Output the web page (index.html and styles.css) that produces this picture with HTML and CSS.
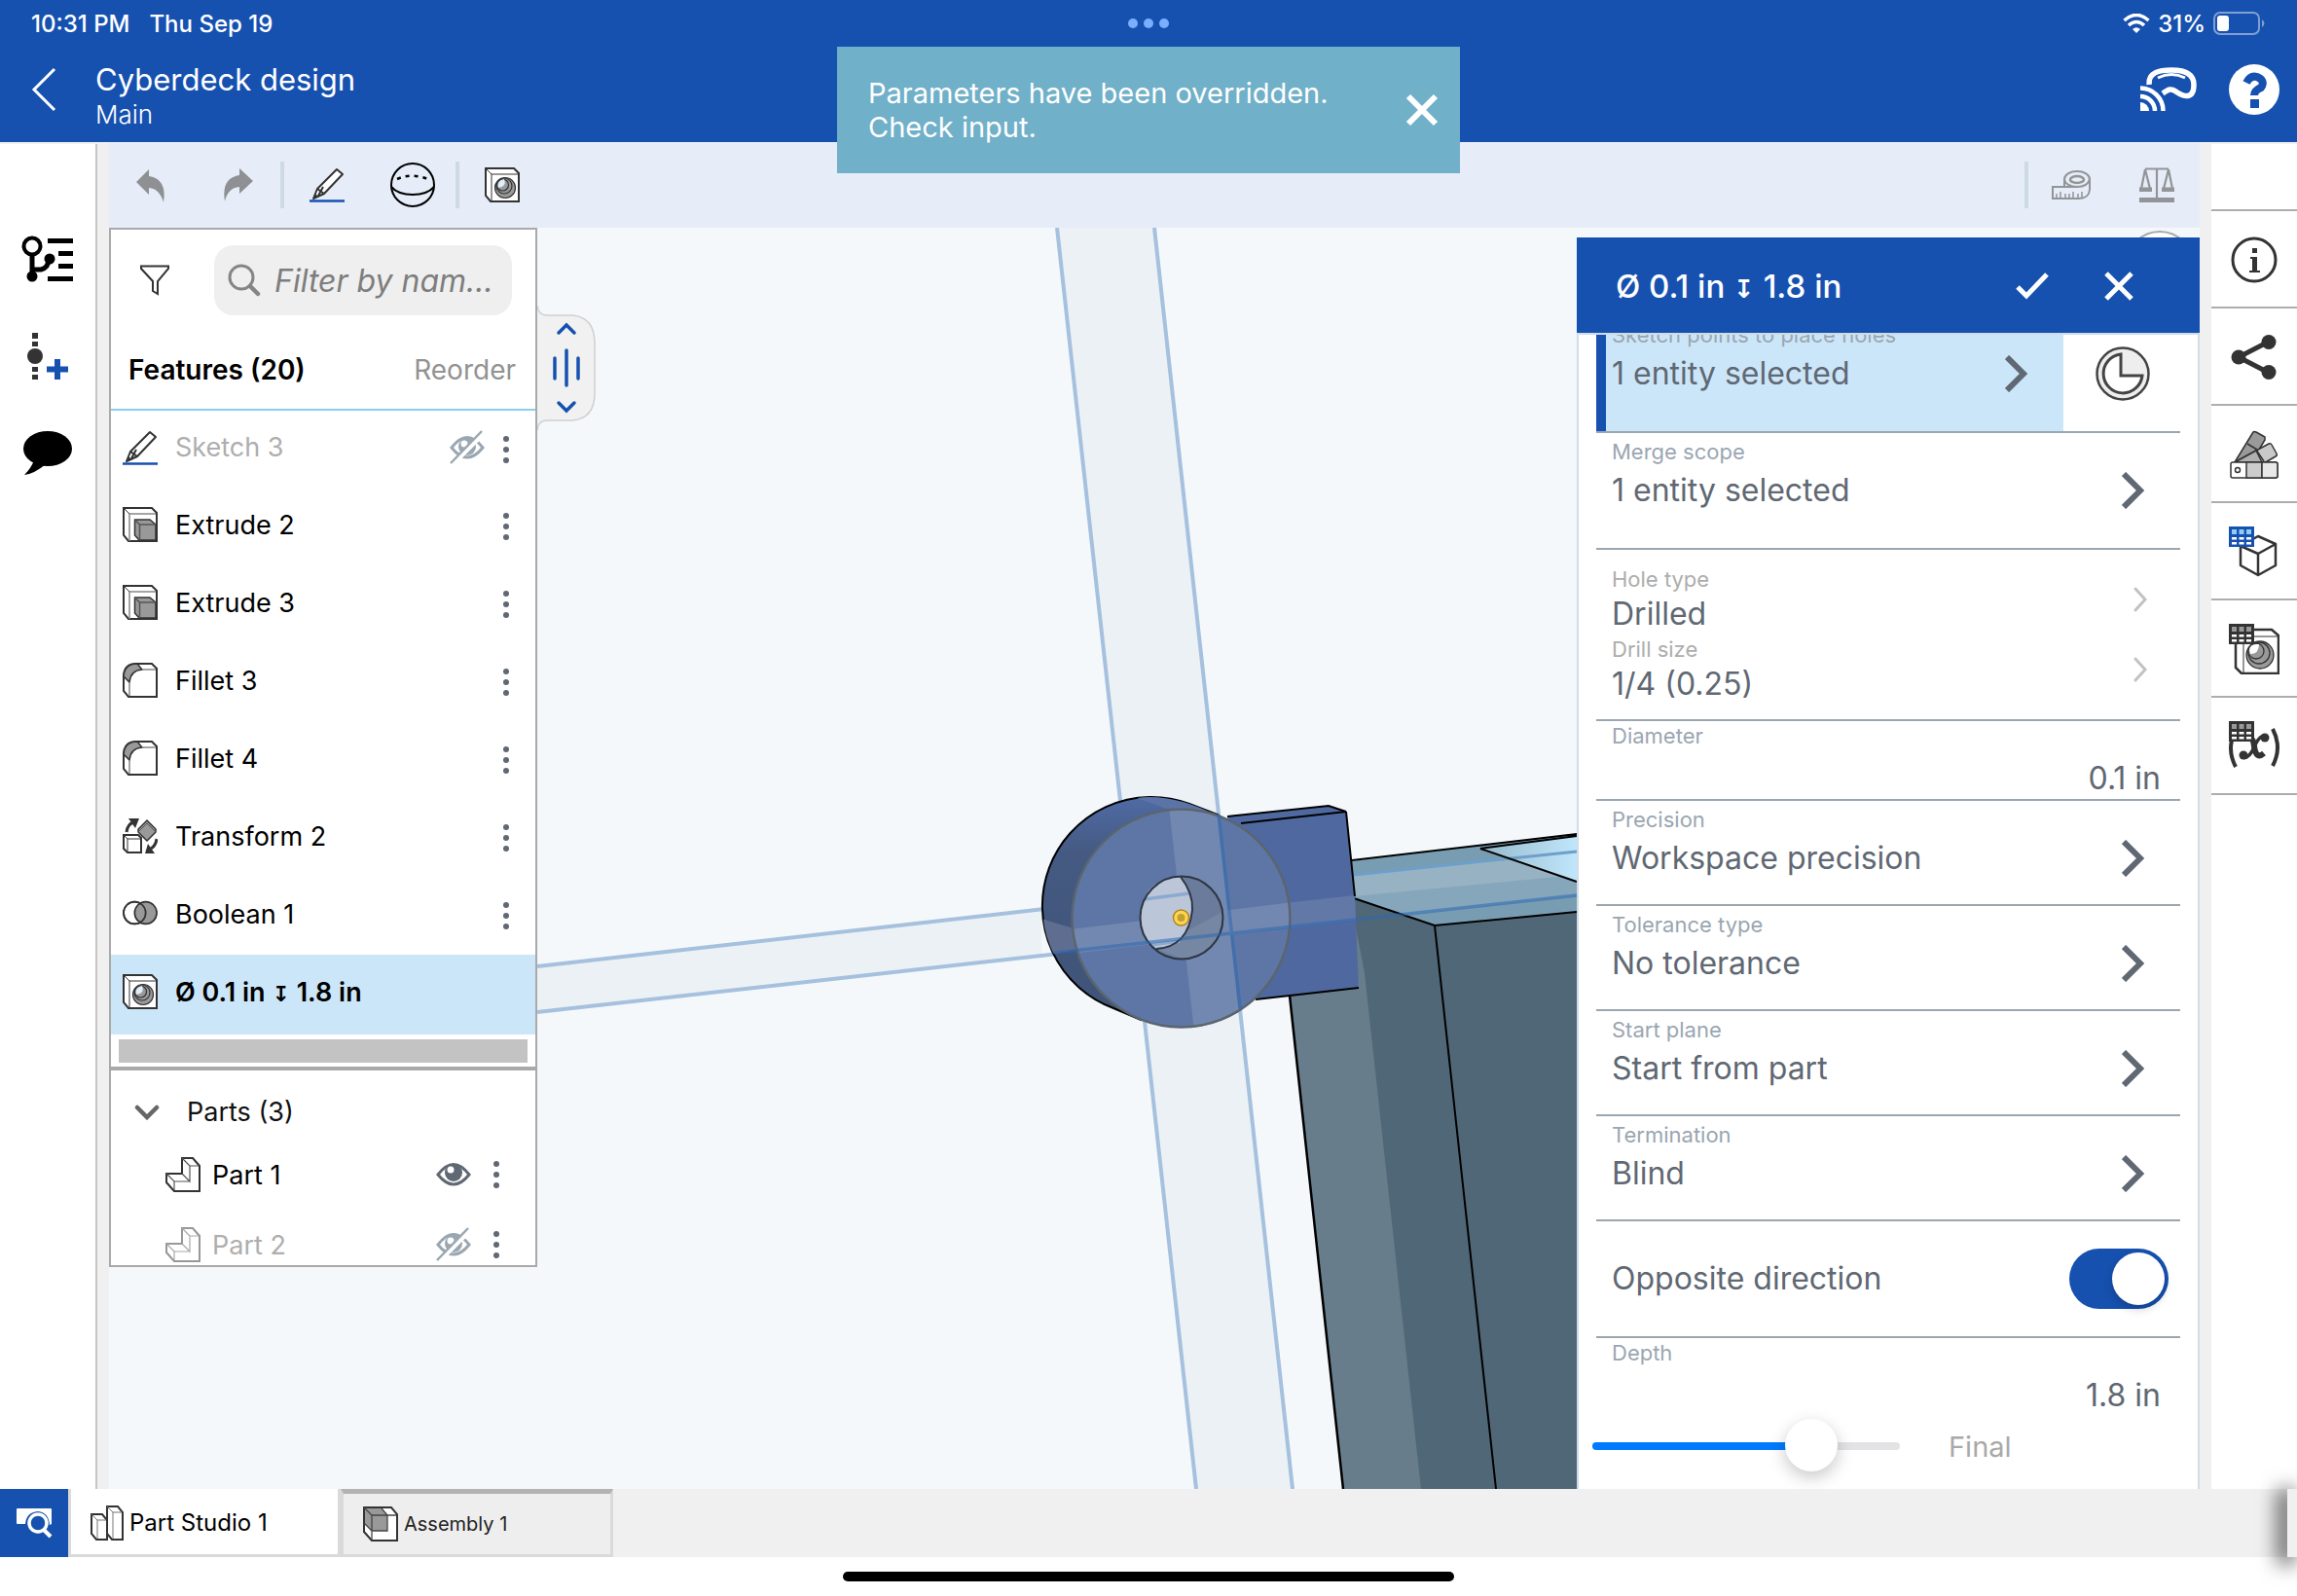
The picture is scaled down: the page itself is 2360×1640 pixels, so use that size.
FILE: index.html
```html
<!DOCTYPE html>
<html lang="en">
<head>
<meta charset="utf-8">
<title>Cyberdeck design</title>
<meta name="viewport" content="width=device-width, initial-scale=1">
<link rel="stylesheet" href="styles.css">
</head>
<body>
<svg class="defs" aria-hidden="true">
  <symbol id="i-dots" viewBox="0 0 8 36"><g fill="#5f6873"><circle cx="4" cy="7" r="3"/><circle cx="4" cy="18" r="3"/><circle cx="4" cy="29" r="3"/></g></symbol>
  <symbol id="i-chev" viewBox="0 0 24 38"><path d="M2 2 19 19 2 36" fill="none" stroke="#5f6873" stroke-width="6"/></symbol>
  <symbol id="i-chev-s" viewBox="0 0 14 26"><path d="M2 2 12 13 2 24" fill="none" stroke="#c2c2c2" stroke-width="3" stroke-linecap="round"/></symbol>
  <symbol id="i-pencil" viewBox="0 0 36 36"><path d="M4 32 8 22 28 2 34 7 15 27ZM8 22l7 5M9 29l5-9" fill="#fff" stroke="#333" stroke-width="2" stroke-linejoin="round"/><path d="M4 32l2-5 3 3z" fill="#333"/><path d="M0 34.500H36" stroke="#1651b0" stroke-width="2.500"/></symbol>
  <symbol id="i-extrude" viewBox="0 0 36 36"><path d="M1 1H30L35 6V35H6L1 29Z" fill="#fff" stroke="#333" stroke-width="2"/><path d="M7 35V7H34" fill="none" stroke="#888" stroke-width="1.500"/><path d="M1 1 7 7" stroke="#333"/><path d="M12.500 13H28L34 18V34H17L12.500 29Z" fill="#999" stroke="#333" stroke-width="1.500"/><path d="M12.500 13 17.500 18H34M17.500 18V34" fill="none" stroke="#555" stroke-width="1.500"/></symbol>
  <symbol id="i-fillet" viewBox="0 0 36 36"><path d="M1 29V13Q2 1 14 1H30L35 6V35H6Z" fill="#fff" stroke="#333" stroke-width="2"/><path d="M1 14Q2 1 15 1L20 7Q8 8 7 20Z" fill="#999" stroke="#333" stroke-width="1.500"/><path d="M7 20V34M20 7H34" stroke="#888" stroke-width="1.500"/></symbol>
  <symbol id="i-transform" viewBox="0 0 36 36"><path d="M1 17H16L19 20V35H5L1 31Z" fill="#fff" stroke="#333" stroke-width="2"/><path d="M1 17 5 21V34M5 21H18" fill="none" stroke="#333"/><path d="M25 2 34 11V14L25 23 16 14V11Z" fill="#999" stroke="#333" stroke-width="1.500"/><path d="M16 14 25 5 34 14" fill="none" stroke="#555"/><path d="M4 14Q5 6 11 4" fill="none" stroke="#333" stroke-width="3"/><path d="M6 0H17L13 10Z" fill="#333"/><path d="M35 21Q34 28 29 31" fill="none" stroke="#333" stroke-width="3"/><path d="M23 36H33L26 26Z" fill="#333"/></symbol>
  <symbol id="i-boolean" viewBox="0 0 38 36"><g stroke="#333" stroke-width="1.800"><circle cx="13" cy="17" r="12" fill="#fff"/><circle cx="25" cy="17" r="12" fill="#999"/><circle cx="13" cy="17" r="12" fill="none"/></g></symbol>
  <symbol id="i-hole" viewBox="0 0 36 36"><path d="M1 1H30L35 6V35H6L1 29Z" fill="#fff" stroke="#333" stroke-width="2"/><path d="M1 1 7 7V34M7 7H34" fill="none" stroke="#333" stroke-width="1"/><g stroke="#333" stroke-width="1.200"><circle cx="21" cy="21" r="10.500" fill="#999"/><circle cx="20" cy="19" r="8" fill="#999"/><circle cx="18.500" cy="18" r="6" fill="#999"/></g><path d="M20 12Q23 20 14 21 12 14 20 12Z" fill="#dfeefa"/></symbol>
  <symbol id="i-part" viewBox="0 0 36 36"><path d="M17 1H28L35 9V35H9L1 26V17H17Z" fill="#fff" stroke="#333" stroke-width="2"/><path d="M17 1 25 9V25L17 17M1 17 9 25H25M9 25V34M25 9H34" fill="none" stroke="#555" stroke-width="1.200"/></symbol>
  <symbol id="i-eye" viewBox="0 0 36 36"><path d="M2 18Q18-3 34 18 18 38 2 18Z" fill="#fff" stroke="#5f6873" stroke-width="3"/><circle cx="18" cy="16" r="9" fill="#5f6873"/><circle cx="15" cy="13" r="3.500" fill="#fff"/></symbol>
  <symbol id="i-eye-off" viewBox="0 0 36 36"><path d="M2 18Q18-3 34 18 18 38 2 18Z" fill="#fff" stroke="#9aa7b2" stroke-width="3"/><circle cx="18" cy="17" r="9" fill="#9aa7b2"/><circle cx="15" cy="14" r="3.500" fill="#fff"/><path d="M1 37 35 3" stroke="#fff" stroke-width="5"/><path d="M1 34 33 1" stroke="#9aa7b2" stroke-width="2.500"/></symbol>
  <symbol id="i-grid" viewBox="0 0 26 21"><path d="M0 0H26V21H0Z"/><path d="M3 3h5v5H3zM10.500 3h5v5h-5zM18 3h5v5h-5z" fill="var(--cell)"/><path d="M3 11h5v2.500H3zM10.500 11h5v2.500h-5zM18 11h5v2.500h-5zM3 16h5v2.500H3zM10.500 16h5v2.500h-5zM18 16h5v2.500h-5z" fill="#fff"/></symbol>
</svg>

<header class="header">
  <div class="status">
    <div class="status-left"><span>10:31 PM</span><span>Thu Sep 19</span></div>
    <svg class="multitask" width="42" height="10" viewBox="0 0 42 10" fill="#7aaeff"><circle cx="5" cy="5" r="5"/><circle cx="21" cy="5" r="5"/><circle cx="37" cy="5" r="5"/></svg>
    <div class="status-right">
      <svg width="28" height="20" viewBox="0 0 28 20"><g fill="none" stroke="#fff" stroke-width="3.600"><path d="M1.500 7Q14-4 26.500 7"/><path d="M6 12Q14 5 22 12"/></g><path d="M10 16Q14 12.500 18 16L14 20Z" fill="#fff"/></svg>
      <span>31%</span>
      <svg width="54" height="24" viewBox="0 0 54 24"><rect x="1" y="1" width="46" height="22" rx="6" fill="none" stroke="#809fd4" stroke-width="2"/><rect x="4" y="4" width="12" height="16" rx="3" fill="#fff"/><path d="M50 8Q55 12 50 16Z" fill="#809fd4"/></svg>
    </div>
  </div>
  <div class="nav">
    <button class="plain back" aria-label="Back"><svg width="26" height="46" viewBox="0 0 26 46"><path d="M24 2 3 23 24 44" fill="none" stroke="#fff" stroke-width="3"/></svg></button>
    <div class="doc"><h1>Cyberdeck design</h1><p>Main</p></div>
    <div class="nav-actions">
      <button class="plain" aria-label="Cast"><svg width="58" height="46" viewBox="0 0 58 46" fill="none" stroke="#fff"><path d="M9 18C8 5 20 3 32 3 46 3 55 7 55 18 55 34 44 30 38 26 31 21 29 23 23 27" stroke-width="5.500"/><path d="M18 11Q32 4 46 11" stroke-width="3"/><path d="M0 21.500A23.500 23.500 0 0 1 23.500 45M0 30A15 15 0 0 1 15 45" stroke-width="4.500"/><path d="M0 36A9 9 0 0 1 9 45H0Z" fill="#fff" stroke="none"/></svg></button>
      <button class="plain" aria-label="Help"><svg width="52" height="52" viewBox="0 0 52 52"><circle cx="26" cy="26" r="26" fill="#fff"/><path d="M18 19Q22 11 29 13 38 17 33 24 26 27 26 32" fill="none" stroke="#1651b0" stroke-width="8"/><path d="M22 36h9v9h-9z" fill="#1651b0"/></svg></button>
    </div>
  </div>
  <div class="toast" role="alert">
    <p>Parameters have been overridden.<br>Check input.</p>
    <button class="plain" aria-label="Dismiss"><svg width="34" height="34" viewBox="0 0 34 34"><path d="M3 3 31 31M31 3 3 31" stroke="#fff" stroke-width="6"/></svg></button>
  </div>
</header>

<main class="main">
  <nav class="rail-left">
    <button class="plain" aria-label="Versions"><svg width="54" height="50" viewBox="0 0 54 50"><circle cx="11" cy="12" r="8.500" fill="none" stroke="#000" stroke-width="4"/><path d="M11 20V42M11 36H20Q28 34 28 25" fill="none" stroke="#000" stroke-width="5"/><circle cx="11" cy="43" r="5.500"/><circle cx="29" cy="25" r="5.500"/><path d="M27 4H53V9H27ZM38 17H53V22H38ZM38 30H53V35H38ZM27 43H53V48H27Z"/></svg></button>
    <button class="plain" aria-label="Insert"><svg width="44" height="50" viewBox="0 0 44 50"><g fill="#333"><path d="M6 1h6v6H6zM6 10h6v5H6zM6 36h6v5H6zM6 44h6v5H6z"/><circle cx="9" cy="25" r="8"/></g><path d="M32 28V49M21 38.500H43" stroke="#1651b0" stroke-width="6"/></svg></button>
    <button class="plain" aria-label="Comments"><svg width="52" height="46" viewBox="0 0 52 46"><ellipse cx="26" cy="18" rx="25" ry="18"/><path d="M12 30Q9 38 2 45 12 44 24 34Z"/></svg></button>
  </nav>

  <section class="studio">
    <div class="toolbar">
      <div class="tools">
        <button class="plain" aria-label="Undo"><svg width="36" height="36" viewBox="0 0 36 36"><path d="M2 15 15 2V9Q34 12 30 36 26 22 15 21V28Z" fill="#8e9093"/></svg></button>
        <button class="plain" aria-label="Redo"><svg width="36" height="36" viewBox="0 0 36 36"><path d="M34 14 20 1V8Q1 11 5 35 8 21 20 20V27Z" fill="#8e9093"/></svg></button>
        <span class="sep"></span>
        <button class="plain" aria-label="Sketch"><svg width="36" height="36"><use href="#i-pencil"/></svg></button>
        <button class="plain" aria-label="Solid"><svg width="46" height="46" viewBox="0 0 46 46" fill="none" stroke="#000" stroke-width="2"><circle cx="23" cy="23" r="22"/><path d="M1 25Q8 33 23 33T45 25"/><path d="M7 17Q23 10 41 18" stroke-dasharray="4 5" stroke-width="2.500"/></svg></button>
        <span class="sep"></span>
        <button class="plain" aria-label="Hole"><svg width="36" height="36"><use href="#i-hole"/></svg></button>
      </div>
      <div class="tools">
        <span class="sep"></span>
        <button class="plain" aria-label="Measure"><svg width="40" height="30" viewBox="0 0 40 30" fill="none" stroke="#929497" stroke-width="2"><path d="M13 17V9A13 8 0 0 1 39 9V20Q38 29 28 29H1V17H26Q37 17 39 9M13 9A13 8 0 0 0 26 17"/><ellipse cx="26" cy="9.500" rx="7" ry="3.500" stroke-width="2.500"/><path d="M5 28V24M9 28V22M14 28V24M18 28V24M22 28V22M27 28V24M31 28V22" stroke-width="1.500"/></svg></button>
        <button class="plain" aria-label="Mass properties"><svg width="36" height="36" viewBox="0 0 36 36"><path d="M6 1.500H30M18 1V32M6 2 2 22M6 2 11 22M30 2 25 22M30 2 34 22" fill="none" stroke="#929497" stroke-width="2.200"/><path d="M0 20.500H13V25H0ZM23 20.500H36V25H23ZM0 31H36V36H0Z" fill="#929497"/></svg></button>
      </div>
    </div>

    <div class="canvas">
      <svg class="scene" viewBox="112 234 2148 1296" preserveAspectRatio="xMinYMin slice" aria-label="3D model view">
        <defs>
          <linearGradient id="side" x1="0" y1="0" x2="0" y2="1"><stop offset="0" stop-color="#4f6ba5"/><stop offset=".25" stop-color="#455a82"/><stop offset="1" stop-color="#3f5377"/></linearGradient>
          <linearGradient id="sky" x1="0" y1="0" x2="1" y2="0"><stop offset="0" stop-color="#96b9cc"/><stop offset="1" stop-color="#c0e6fb"/></linearGradient>
          <clipPath id="face"><circle cx="1213.500" cy="943.500" r="113"/></clipPath>
          <clipPath id="back"><circle cx="1183" cy="931" r="112"/></clipPath>
        </defs>
        <circle cx="2219" cy="272" r="34" fill="#fff" stroke="#a8a8a8" stroke-width="2"/>
        <path d="M1086 234H1186L1328 1530H1229Z" fill="#ecf1f5"/>
        <path d="M552 993 1070 935V981L552 1040Z" fill="#ecf1f5"/>
        <g stroke="#a5c1de" stroke-width="4"><path d="M1086 234 1229 1530M1186 234 1328 1530M552 993 1240 915M552 1040 1240 963"/></g>
        <path d="M1387 885 1620 857V940L1474 951 1385 921Z" fill="#789db2"/>
        <path d="M1390 899 1620 875V920L1410 944 1385 921Z" fill="#86a6bb"/>
        <path d="M1390 899 1620 875V899L1391 921Z" fill="#97b3c3"/>
        <path d="M1521 872 1620 859V906Z" fill="url(#sky)"/>
        <path d="M1385 921 1474 951 1620 937V1530H1380L1325 1023 1396 1015Z" fill="#506777"/>
        <path d="M1387 922 1402 1000 1460 1530H1380L1325 1023 1396 1015Z" fill="#687d8b"/>
        <path d="M1391 899 1620 875" stroke="#6e9fca" stroke-width="3"/>
        <g fill="none" stroke="#000" stroke-width="2"><path d="M1389 884 1620 857M1620 906 1521 872 1620 859M1385 921 1474 951 1620 937M1474 951 1537 1530"/><path d="M1325 1023 1380 1530" stroke-width="2.500"/></g>
        <path d="M1261 839 1365 828 1383 834 1392 921 1396 1015 1290 1027Z" fill="#4f69a0"/>
        <path d="M1320 928 1392 920 1393 946 1326 954Z" fill="#6278a7"/>
        <path d="M1261 839 1365 828 1383 834 1275 846M1383 834 1392 921M1290 1027 1396 1015" fill="none" stroke="#000" stroke-width="2"/>
        <path d="M1144 1036A112 112 0 1 1 1222 826L1251 837 1172 1048Z" fill="url(#side)" stroke="#000" stroke-width="2"/>
        <path d="M1168 820Q1205 815 1250 838L1201 832Z" fill="#5b73a6"/>
        <path clip-path="url(#back)" d="M1070 944 1106 955V976L1070 982Z" fill="#5f6e90"/>
        <circle cx="1213.500" cy="943.500" r="112" fill="#5d76a5"/>
        <g clip-path="url(#face)"><path d="M1201 828 1250 828 1275 1060H1227Z" fill="#7288b0"/><path d="M1100 955 1330 927V953L1100 980Z" fill="#7288b0"/></g>
        <circle cx="1213.500" cy="943.500" r="112" fill="none" stroke="#5b656f" stroke-width="2.500"/>
        <circle cx="1214" cy="943" r="42.500" fill="#6b7b9b"/>
        <path d="M1217 958 1256 937Q1258 985 1214 985L1190 976Z" fill="#7587a2"/>
        <path d="M1213 901Q1226 918 1225 935 1221 973 1188 975 1168 958 1172 935 1178 902 1213 901Z" fill="#bbc7d8"/>
        <path d="M1176 924 1222 918M1182 971 1212 967" stroke="#8ea9cf" stroke-width="3.500"/>
        <path d="M1213 901Q1226 918 1225 935 1221 973 1188 975" fill="none" stroke="#2c3544" stroke-width="2"/>
        <circle cx="1214" cy="943" r="42.500" fill="none" stroke="#2c3544" stroke-width="2"/>
        <path d="M1083 979 1620 920M1252 837 1274 1036" stroke="#2c67b0" stroke-opacity=".55" stroke-width="3.500"/>
        <circle cx="1213.500" cy="943" r="8" fill="#ffd453" stroke="#b1861a" stroke-width="1.500"/><circle cx="1213.500" cy="943" r="4" fill="#c0a032"/>
      </svg>

      <aside class="features">
        <div class="filter">
          <button class="plain" aria-label="Filter"><svg width="30" height="32" viewBox="0 0 30 32"><path d="M1 1.500H29V4L18 17V30L13 27V17L1 4Z" fill="#fff" stroke="#333" stroke-width="2"/></svg></button>
          <label class="search">
            <svg width="34" height="34" viewBox="0 0 34 34"><circle cx="14" cy="14" r="12" fill="none" stroke="#858585" stroke-width="3"/><path d="M23 23 31 31" stroke="#858585" stroke-width="4.500" stroke-linecap="round"/></svg>
            <input type="text" placeholder="Filter by nam..." aria-label="Filter by name">
          </label>
        </div>
        <div class="features-head"><h2>Features (20)</h2><button class="plain reorder">Reorder</button></div>
        <ul class="list">
          <li class="muted"><svg width="36" height="36"><use href="#i-pencil"/></svg><span>Sketch 3</span><svg width="36" height="40"><use href="#i-eye-off"/></svg><svg class="more" width="8" height="36"><use href="#i-dots"/></svg></li>
          <li><svg width="36" height="36"><use href="#i-extrude"/></svg><span>Extrude 2</span><svg class="more" width="8" height="36"><use href="#i-dots"/></svg></li>
          <li><svg width="36" height="36"><use href="#i-extrude"/></svg><span>Extrude 3</span><svg class="more" width="8" height="36"><use href="#i-dots"/></svg></li>
          <li><svg width="36" height="36"><use href="#i-fillet"/></svg><span>Fillet 3</span><svg class="more" width="8" height="36"><use href="#i-dots"/></svg></li>
          <li><svg width="36" height="36"><use href="#i-fillet"/></svg><span>Fillet 4</span><svg class="more" width="8" height="36"><use href="#i-dots"/></svg></li>
          <li><svg width="36" height="36"><use href="#i-transform"/></svg><span>Transform 2</span><svg class="more" width="8" height="36"><use href="#i-dots"/></svg></li>
          <li><svg width="36" height="36"><use href="#i-boolean"/></svg><span>Boolean 1</span><svg class="more" width="8" height="36"><use href="#i-dots"/></svg></li>
          <li class="selected"><svg width="36" height="36"><use href="#i-hole"/></svg><span>Ø 0.1 in <b class="depth">↧</b> 1.8 in</span></li>
        </ul>
        <div class="rollback"></div>
        <div class="parts">
          <button class="plain parts-head"><svg width="26" height="16" viewBox="0 0 26 16"><path d="M3 3 13 13 23 3" fill="none" stroke="#666" stroke-width="4.500" stroke-linecap="round"/></svg>Parts (3)</button>
          <ul>
            <li><svg width="36" height="36"><use href="#i-part"/></svg><span>Part 1</span><svg width="36" height="36"><use href="#i-eye"/></svg><svg class="more" width="8" height="36"><use href="#i-dots"/></svg></li>
            <li class="muted"><svg class="faded" width="36" height="36"><use href="#i-part"/></svg><span>Part 2</span><svg width="36" height="40"><use href="#i-eye-off"/></svg><svg class="more" width="8" height="36"><use href="#i-dots"/></svg></li>
          </ul>
        </div>
      </aside>
      <button class="plain handle" aria-label="Resize panel"><svg width="60" height="130" viewBox="0 0 60 130"><path d="M0 1Q1 11 10 11H36Q59 13 59 40V91Q59 117 36 119H10Q1 119 0 129" fill="#f1f1f1" stroke="#cfcfcf" stroke-width="1.500"/><g fill="none" stroke="#1651b0" stroke-width="3.500" stroke-linecap="round"><path d="M22 29 30 21 38 29M22 101 30 109 38 101M30 47V83M18 55V76M42 55V76"/></g></svg></button>

      <form class="dialog">
        <div class="dialog-head">
          <h2>Ø 0.1 in <b class="depth">↧</b> 1.8 in</h2>
          <button type="button" class="plain" aria-label="Accept"><svg width="36" height="30" viewBox="0 0 36 30"><path d="M3 16 12 25 33 3" fill="none" stroke="#fff" stroke-width="5"/></svg></button>
          <button type="button" class="plain" aria-label="Cancel"><svg width="30" height="30" viewBox="0 0 30 30"><path d="M2 2 28 28M28 2 2 28" stroke="#fff" stroke-width="5"/></svg></button>
        </div>
        <div class="dialog-body">
          <div class="row row-tall points">
            <button type="button" class="plain field active"><span class="label">Sketch points to place holes</span><span class="value">1 entity selected<svg width="24" height="38"><use href="#i-chev"/></svg></span></button>
            <button type="button" class="plain final" aria-label="Show final"><svg width="56" height="56" viewBox="0 0 56 56"><circle cx="28" cy="28" r="26.500" fill="#eee" stroke="#444" stroke-width="2.500"/><path d="M26 8A20 20 0 1 0 48 30H26Z" fill="#fff" stroke="#444" stroke-width="3"/></svg></button>
          </div>
          <div class="row row-tall"><button type="button" class="plain field"><span class="label">Merge scope</span><span class="value">1 entity selected<svg width="24" height="38"><use href="#i-chev"/></svg></span></button></div>
          <div class="row row-group">
            <button type="button" class="plain choice"><span><span class="label">Hole type</span><span class="value">Drilled</span></span><svg width="14" height="26"><use href="#i-chev-s"/></svg></button>
            <button type="button" class="plain choice"><span><span class="label">Drill size</span><span class="value">1/4 (0.25)</span></span><svg width="14" height="26"><use href="#i-chev-s"/></svg></button>
          </div>
          <div class="row row-number"><label class="label" for="diameter">Diameter</label><input id="diameter" type="text" value="0.1 in"></div>
          <div class="row"><button type="button" class="plain field"><span class="label">Precision</span><span class="value">Workspace precision<svg width="24" height="38"><use href="#i-chev"/></svg></span></button></div>
          <div class="row"><button type="button" class="plain field"><span class="label">Tolerance type</span><span class="value">No tolerance<svg width="24" height="38"><use href="#i-chev"/></svg></span></button></div>
          <div class="row"><button type="button" class="plain field"><span class="label">Start plane</span><span class="value">Start from part<svg width="24" height="38"><use href="#i-chev"/></svg></span></button></div>
          <div class="row"><button type="button" class="plain field"><span class="label">Termination</span><span class="value">Blind<svg width="24" height="38"><use href="#i-chev"/></svg></span></button></div>
          <div class="row row-tall row-switch"><label for="opposite">Opposite direction</label><input id="opposite" class="switch" type="checkbox" checked></div>
          <div class="row row-number row-last"><label class="label" for="depth">Depth</label><input id="depth" type="text" value="1.8 in"></div>
          <div class="progress"><input id="final" type="range" min="0" max="1000" value="756"><label for="final">Final</label></div>
        </div>
      </form>
    </div>
  </section>

  <nav class="rail-right">
    <span class="blank"></span>
    <button class="plain" aria-label="Details"><svg width="52" height="52" viewBox="0 0 52 52"><circle cx="26" cy="26" r="22" fill="none" stroke="#333" stroke-width="3"/><path d="M24 14h5v5h-5zM22 23h7v14h3v2H21v-2h3V25h-2z" fill="#333"/></svg></button>
    <button class="plain" aria-label="Share"><svg width="52" height="52" viewBox="0 0 52 52"><path d="M41 10 10 26 41 42" fill="none" stroke="#333" stroke-width="5"/><g fill="#333"><circle cx="41" cy="10.500" r="7.500"/><circle cx="10" cy="26" r="7.500"/><circle cx="41" cy="41.500" r="7.500"/></g></svg></button>
    <button class="plain" aria-label="Appearance"><svg width="52" height="52" viewBox="0 0 52 52" stroke="#333" stroke-width="1.500" stroke-linejoin="round"><path d="M6 34 25 3Q26 2 28 3L37 8 37 11 22 36Z" fill="#9a9a9a"/><path d="M6 34 41 15Q43 14 44 16L49 25Q50 27 48 28L36 35H20Z" fill="#c9c9c9"/><path d="M6 34 28 22 34 34Z" fill="#b0b0b0"/><path d="M19 15 29 21M28 21 36 33" fill="none"/><rect x="2" y="34" width="48" height="16" rx="2" fill="#fff"/><path d="M18 34H34V50H18Z" fill="#ccc"/><path d="M34 34H48Q50 34 50 36V48Q50 50 48 50H34Z" fill="#e8e8e8"/><circle cx="9" cy="42" r="2.500" fill="#fff"/></svg></button>
    <button class="plain" aria-label="Configurations"><svg width="52" height="52" viewBox="0 0 52 52"><path d="M12 20 30 10 48 18V40L30 50 12 40ZM12 20 30 28 48 18M30 28V50" fill="#fff" stroke="#333" stroke-width="2.500" stroke-linejoin="round"/><svg class="grid-blue" width="26" height="21"><use href="#i-grid"/></svg></svg></button>
    <button class="plain" aria-label="Hole table"><svg width="52" height="52" viewBox="0 0 52 52"><path d="M7 6H44L51 12V51H13L7 45Z" fill="#fff" stroke="#333" stroke-width="2.500"/><path d="M15 12V50M15 13H50" stroke="#333"/><g fill="#999" stroke="#333" stroke-width="1.300"><circle cx="32" cy="32" r="14"/><circle cx="31" cy="30" r="11"/><circle cx="28" cy="28" r="8"/></g><path d="M21 27Q22 20 31 21 31 31 22 31Z" fill="#fff"/><svg class="grid-dark" width="26" height="21"><use href="#i-grid"/></svg></svg></button>
    <button class="plain" aria-label="Variable table"><svg width="52" height="52" viewBox="0 0 52 52"><path d="M7 9Q-3 28 7 47M45 8Q55 27 45 46" fill="none" stroke="#333" stroke-width="4"/><path d="M17 17Q25 14 26 26 28 40 36 33" fill="none" stroke="#333" stroke-width="6"/><path d="M38 15Q31 14 26 27 20 40 13 37" fill="none" stroke="#333" stroke-width="3.500"/><circle cx="37" cy="17" r="4.500" fill="#333"/><circle cx="15" cy="35" r="4.500" fill="#333"/><svg class="grid-dark" width="26" height="21"><use href="#i-grid"/></svg></svg></button>
  </nav>
</main>

<footer class="footer">
  <div class="tabs">
    <button class="plain tab-search" aria-label="Search tabs"><svg width="38" height="32" viewBox="0 0 38 32"><path d="M1 2Q1 1 2 1H36Q37 1 37 2V17L35 18Q34 5 23 4 11 5 10 17H2Q1 17 1 16Z" fill="#fff"/><circle cx="23" cy="16" r="9" fill="none" stroke="#fff" stroke-width="3.500"/><path d="M28 22 36 30" stroke="#fff" stroke-width="4"/></svg></button>
    <button class="plain tab current"><svg width="34" height="36" viewBox="0 0 34 36"><g fill="#fff" stroke="#333" stroke-width="2"><path d="M1 9H12L17 15V35H6L1 29Z"/><path d="M17 1H28L33 7V35H22L17 29Z"/></g><path d="M1 9 7 15V34M7 15H16M17 1 23 7V34M23 7H32" fill="none" stroke="#777"/></svg>Part Studio 1</button>
    <button class="plain tab"><svg width="36" height="36" viewBox="0 0 36 36"><path d="M1 1H29L35 8V35H9L1 26Z" fill="#fff" stroke="#333" stroke-width="2"/><path d="M2 2H19L25 9V25H9L2 18Z" fill="#999"/><path d="M1 1 9 9V34M9 9H34M9 25H25V9L19 2M9 25 2 18" fill="none" stroke="#444" stroke-width="1.300"/></svg>Assembly 1</button>
    <span class="tabs-edge"></span>
  </div>
  <div class="home"></div>
</footer>
</body>
</html>
```
FILE: styles.css
```css
:root {
  --blue: #1651b0;
  --ink: #5f6873;
  --line: #9aa6b1;
  --pale: #cce6f9;
}

* { box-sizing: border-box; }

body {
  margin: 0;
  min-height: 100vh;
  display: flex;
  flex-direction: column;
  background: #fff;
  color: #111;
  font-family: Inter, "DejaVu Sans", sans-serif;
  font-size: 27px;
}

h1, h2, p, ul { margin: 0; padding: 0; font-weight: 400; }
ul { list-style: none; }
svg { display: block; flex: none; }
.defs { position: absolute; width: 0; height: 0; }

.plain {
  margin: 0;
  padding: 0;
  border: 0;
  background: none;
  color: inherit;
  font: inherit;
  text-align: left;
}
.depth { font-family: "DejaVu Sans", sans-serif; font-size: 22px; font-weight: 700; }

/* Header */
.header {
  position: relative;
  z-index: 2;
  background: var(--blue);
  color: #fff;
}
.status {
  height: 48px;
  padding: 0 32px;
  display: grid;
  grid-template-columns: 1fr auto 1fr;
  align-items: center;
  font-size: 24px;
  font-weight: 500;
}
.status-left { display: flex; gap: 20px; }
.status-right { display: flex; gap: 8px; align-items: center; justify-content: flex-end; }
.nav {
  height: 98px;
  padding: 0 18px 10px 32px;
  display: flex;
  align-items: center;
}
.back { width: 66px; }
.doc { flex: 1; align-self: flex-end; }
.doc h1 { font-size: 31px; line-height: 36px; }
.doc p { font-size: 26px; line-height: 36px; font-weight: 300; }
.nav-actions { display: flex; align-items: center; gap: 33px; }
.toast {
  position: absolute;
  top: 48px;
  left: 50%;
  width: 640px;
  min-height: 130px;
  margin-left: -320px;
  padding: 0 22px 0 32px;
  display: flex;
  align-items: center;
  justify-content: space-between;
  background: #70b0c8;
  font-size: 29px;
  line-height: 35px;
}

/* Main frame */
.main {
  flex: 1;
  display: flex;
  min-height: 0;
  background: #f0f0f0;
}
.rail-left, .rail-right {
  display: flex;
  flex-direction: column;
  margin-top: 2px;
  background: #fff;
}
.rail-left {
  width: 100px;
  padding-top: 68px;
  border-right: 2px solid #c4c4c4;
}
.rail-right { width: 88px; }
.rail-left button, .rail-right button {
  height: 100px;
  display: flex;
  align-items: center;
  justify-content: center;
}
.rail-right button { padding-top: 2px; }
.rail-right button, .blank { border-bottom: 2px solid #adadad; }
.blank { height: 69px; }
.grid-blue { --cell: #8ecdf5; fill: var(--blue); }
.grid-dark { --cell: #999; fill: #333; }

.studio {
  flex: 1;
  min-width: 0;
  margin: 0 12px;
  display: flex;
  flex-direction: column;
}
.toolbar {
  height: 88px;
  padding: 0 26px;
  display: flex;
  align-items: center;
  justify-content: space-between;
  background: #e7edf8;
}
.tools { display: flex; align-items: center; }
.tools .sep { width: 4px; height: 48px; margin: 0 26px; background: #cddae4; }
.tools button { width: 36px; display: flex; justify-content: center; }
.tools button + button { margin-left: 52px; }

.canvas {
  position: relative;
  flex: 1;
  display: flex;
  align-items: flex-start;
  background: #f4f8fb;
}
.scene { position: absolute; inset: 0; width: 100%; height: 100%; }

/* Feature list */
.features {
  position: relative;
  width: 440px;
  border: 2px solid #a9a9a9;
  background: #fff;
}
.filter {
  height: 104px;
  padding: 0 24px 14px 30px;
  display: flex;
  align-items: flex-end;
  gap: 46px;
}
.filter > button { align-self: center; padding-top: 14px; }
.search {
  flex: 1;
  height: 72px;
  margin-bottom: 2px;
  padding: 0 14px;
  display: flex;
  align-items: center;
  gap: 14px;
  border-radius: 20px;
  background: #efefef;
}
.search input {
  width: 100%;
  min-width: 0;
  padding: 0;
  border: 0;
  background: none;
  font: italic 32px Inter, sans-serif;
}
.search input::placeholder { color: #7d7d7d; opacity: 1; }
.features-head {
  height: 82px;
  padding: 0 20px 0 18px;
  display: flex;
  align-items: center;
  justify-content: space-between;
  border-bottom: 2px solid #8fcdf0;
  font-size: 28px;
}
.features-head h2 { font-size: 28px; font-weight: 600; color: #000; }
.reorder { color: #929292; }
.list li, .parts li {
  display: flex;
  align-items: center;
}
.list li {
  height: 80px;
  padding: 0 26px 4px 12px;
  gap: 18px;
}
.list li:first-child { height: 79px; }
.list span, .parts span { flex: 1; color: #000; }
.list .muted span, .parts .muted span { color: #aeaeae; }
.list .more { margin-top: 4px; }
.faded { opacity: .5; }
.list li.selected { height: 82px; padding-bottom: 6px; background: var(--pale); font-weight: 600; }
.rollback {
  height: 24px;
  margin: 5px 8px 4px;
  background: #c3c3c3;
}
.parts {
  height: 204px;
  padding: 0 36px 0 24px;
  overflow: hidden;
  border-top: 4px solid #a9a9a9;
}
.parts-head {
  height: 71px;
  padding-top: 14px;
  display: flex;
  align-items: center;
  gap: 28px;
}
.parts li {
  height: 72px;
  padding-left: 32px;
  gap: 12px;
}
.parts .more { margin-left: 10px; }
.handle { position: relative; margin-top: 79px; }

/* Hole dialog */
.dialog {
  position: absolute;
  top: 10px;
  right: 0;
  bottom: 0;
  width: 640px;
  display: flex;
  flex-direction: column;
  color: var(--ink);
}
.dialog-head {
  height: 98px;
  padding: 2px 68px 0 40px;
  display: flex;
  align-items: center;
  gap: 56px;
  background: var(--blue);
  color: #fff;
}
.dialog-head h2 { flex: 1; font-size: 33px; font-weight: 500; }
.dialog-head .depth { font-size: 26px; }
.dialog-body {
  flex: 1;
  min-height: 0;
  padding: 0 18px;
  overflow: hidden;
  border: 2px solid #d0dce6;
  border-bottom: 0;
  background: #fff;
}
.row { height: 108px; border-bottom: 2px solid var(--line); }
.row-tall { height: 120px; }
.row-group { height: 176px; padding-top: 15px; }
.label {
  display: block;
  font-size: 22px;
  line-height: 28px;
  color: #9aa6b1;
}
.value, .row-number input, .row-switch label {
  display: flex;
  align-items: center;
  justify-content: space-between;
  font-size: 32px;
  line-height: 40px;
}
.field {
  display: flex;
  flex-direction: column;
  gap: 6px;
  width: 100%;
  padding: 5px 36px 0 16px;
}
.points { display: flex; margin-top: -19px; }
.points .active {
  flex: 1;
  padding-left: 6px;
  border-left: 10px solid var(--blue);
  background: var(--pale);
}
.final { width: 120px; padding-left: 33px; }
.choice {
  width: 100%;
  height: 72px;
  padding: 0 34px 0 16px;
  display: flex;
  align-items: center;
  justify-content: space-between;
}
.choice .label { color: #adadad; margin-bottom: 2px; }
.row-number {
  height: 82px;
  padding: 1px 20px 0 16px;
}
.row-number input {
  width: 100%;
  height: 40px;
  margin-top: 10px;
  padding: 0;
  border: 0;
  background: none;
  color: inherit;
  font-family: inherit;
  text-align: right;
}
.row-last { border-bottom: 0; }
.row-switch {
  padding: 0 12px 0 16px;
  display: flex;
  align-items: center;
  justify-content: space-between;
}
.switch {
  appearance: none;
  width: 102px;
  height: 62px;
  margin: 0;
  padding: 4px;
  display: flex;
  justify-content: flex-end;
  border-radius: 31px;
  background: var(--blue);
}
.switch::before {
  content: "";
  width: 54px;
  height: 54px;
  border-radius: 50%;
  background: #fff;
  box-shadow: 0 4px 10px rgba(0, 0, 0, .2);
}
.progress {
  height: 58px;
  margin-left: -4px;
  display: flex;
  align-items: center;
  gap: 50px;
  color: #a9a9a9;
  font-size: 29px;
}
.progress input {
  appearance: none;
  width: 316px;
  height: 54px;
  margin: 0;
  background: none;
}
.progress input::-webkit-slider-runnable-track {
  height: 8px;
  border-radius: 4px;
  background: linear-gradient(90deg, #007aff 71%, #e3e3e5 71%);
}
.progress input::-webkit-slider-thumb {
  appearance: none;
  width: 54px;
  height: 54px;
  margin-top: -24px;
  border-radius: 50%;
  background: #fff;
  box-shadow: 0 6px 18px rgba(0, 0, 0, .22);
}

/* Footer */
.footer { position: relative; }
.tabs {
  height: 70px;
  display: flex;
  background: #f0f0f0;
}
.tab-search {
  width: 70px;
  display: flex;
  align-items: center;
  justify-content: center;
  background: var(--blue);
}
.tab {
  width: 280px;
  padding-left: 20px;
  display: flex;
  align-items: center;
  gap: 6px;
  border: 3px solid #dadada;
  border-top: 5px solid #b3b3b3;
  background: #eee;
  color: #222;
  font-size: 20px;
}
.tab.current {
  border-top-width: 0;
  padding-top: 2px;
  background: #fff;
  color: #000;
  font-size: 24px;
}
.tabs-edge {
  width: 10px;
  margin-left: auto;
  background: #f0f0f0;
  box-shadow: -6px 4px 20px 4px rgba(0, 0, 0, .6);
}
.home {
  width: 628px;
  height: 10px;
  margin: 15px auto;
  border-radius: 5px;
  background: #000;
}
```
